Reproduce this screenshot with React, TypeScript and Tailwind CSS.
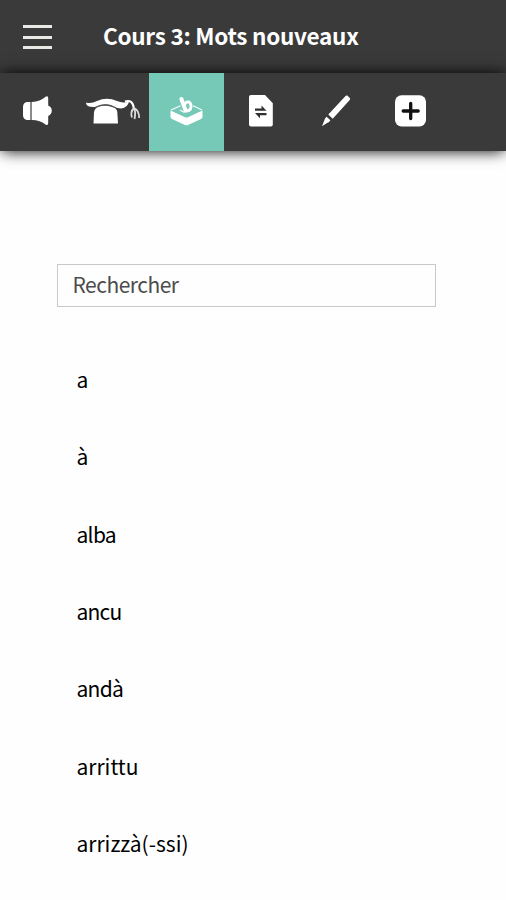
import type { ReactNode } from "react";

const words = [
  { text: "a", spacing: "tracking-normal" },
  { text: "à", spacing: "tracking-normal" },
  { text: "alba", spacing: "tracking-[-0.7px]" },
  { text: "ancu", spacing: "tracking-[-0.8px]" },
  { text: "andà", spacing: "tracking-[-0.7px]" },
  { text: "arrittu", spacing: "tracking-normal" },
  { text: "arrizzà(-ssi)", spacing: "tracking-normal" },
];

function Tab({ label, active, children }: { label: string; active?: boolean; children: ReactNode }) {
  return (
    <button aria-label={label} className={`h-[78px] shrink-0 ${active ? "w-[75px] bg-[#76c9b6]" : "w-[74.5px]"}`}>
      <svg viewBox="0 0 75 78" className="h-[78px] w-[75px]" fill="white">
        {children}
      </svg>
    </button>
  );
}

export default function App() {
  return (
    <div className="h-[900px] w-full overflow-hidden bg-[#fefefe] font-['Noto_Sans_CJK_SC','Noto_Sans',sans-serif] text-black">
      <header className="flex h-[73px] items-center bg-[#3a3a3a]">
        <button aria-label="Menu" className="ml-[23px] flex w-[29px] flex-col gap-[7.5px] pt-[1px]">
          <span className="h-[3px] bg-[#e8e8e4]" />
          <span className="h-[3px] bg-[#e8e8e4]" />
          <span className="h-[3px] bg-[#e8e8e4]" />
        </button>
        <h1 className="ml-[51px] pb-[4px] text-[22.5px] leading-[32px] font-bold tracking-[-0.27px] whitespace-nowrap text-white">
          Cours 3: Mots nouveaux
        </h1>
      </header>
      <nav className="relative flex h-[78px] bg-[#3a3a3a] shadow-[0_-1px_14px_-1px_rgba(0,0,0,0.9),0_5px_14px_-4px_rgba(0,0,0,0.4)]">
        <Tab label="Audio">
          <path d="M26.5 29 H30 V47 H26.5 Q23 46 23 42 V34 Q23 30 26.5 29Z" />
          <path d="M30 29H32V47H30Z" fill="#8a8a8a" />
          <path d="M32 29 Q40 28.5 46 23.5 Q48 22.3 48.2 25 V32.5 Q51.8 34 51.8 37.5 Q51.8 41 48.2 43 V50 Q48 53 45.5 51.5 Q40 47 32 47Z" />
        </Tab>
        <Tab label="Leçons">
          <path d="M11 29.5 Q16 31 22 28 Q32 23.5 42 28 Q48 30.5 54 28.5 Q53 34.5 46 35.5 Q42 35.5 39 33.5 Q30 29 20 34 Q11 34.5 11 29.5Z" />
          <path d="M20 34.5 Q30 29 40.5 34.5" fill="none" stroke="#5a5a5a" strokeWidth="0.9" />
          <path d="M23 34 Q30 31.5 37 34 Q42 35 42.3 39 L43 50.5 H18.5 L19 39 Q20 35 23 34Z" />
          <path d="M50 28.5 Q58 26 59 36" fill="none" stroke="white" strokeWidth="2" />
          <path d="M59 35 Q55 39 57 44.5 M59 35 Q61 39 59.5 46 M59 35 Q64 37 64.2 45" fill="none" stroke="#dedede" strokeWidth="1.8" />
        </Tab>
        <Tab label="Vocabulaire" active>
          <path d="M21.5 37.5 L35.5 44 Q37.5 45 39.5 44 L53.5 37.5 V44 Q53.5 45.3 51.5 46.2 L39 52 Q37.5 52.7 36 52 L23.5 46.2 Q21.5 45.3 21.5 44Z" />
          <path d="M22 37 L31.5 32.8 M44 32.8 L53 37 M31 37 L35.5 39.5" fill="none" stroke="white" strokeWidth="1.1" />
          <path d="M32.4 26 L36.6 37.5" fill="none" stroke="white" strokeWidth="4" strokeLinecap="round" />
          <path d="M36 30.5 Q40.3 26.8 41.8 31.5 Q43.2 37.4 37.5 38" fill="none" stroke="white" strokeWidth="3" strokeLinecap="round" />
        </Tab>
        <Tab label="Traduction">
          <path d="M27 22 H41 L48.8 30.3 V51.5 Q48.8 53.5 46.8 53.5 H27 Q25 53.5 25 51.5 V24 Q25 22 27 22Z" />
          <path d="M31 35.5 H37.5 V32.5 L42.5 37.7 H31Z M42.5 40 H31 L36 45.3 V42.2 H42.5Z" fill="#303030" />
        </Tab>
        <Tab label="Exercices">
          <path d="M48.3 22.6 L51 25.3 Q51.4 26 50.7 27 L33.7 45.7 L29.3 41.5 L46.3 23.2 Q47.3 22 48.3 22.6Z M27.6 43.7 L31.4 47.3 Q30.4 49.3 28 49.9 L23 53.3 L25 48.3 Q25.8 45 27.6 43.7Z" />
        </Tab>
        <Tab label="Ajouter">
          <rect x="22" y="22.3" width="31" height="31.2" rx="6.5" />
          <path d="M30.2 38 H45.2 M37.7 30.5 V45.5" stroke="#101010" strokeWidth="3.3" strokeLinecap="round" />
        </Tab>
      </nav>
      <main>
        <div className="mt-[113px] ml-[57px] flex h-[43px] w-[379px] border border-[#c9c9c9] bg-[#fefefe]">
          <input
            aria-label="Rechercher"
            placeholder="Rechercher"
            className="w-full pb-[4px] pl-[14.5px] text-[21px] leading-[32px] tracking-[-0.5px] outline-none placeholder:text-[#4c4c4c]"
          />
        </div>
        <ul className="mt-[33.5px] ml-[76.5px]">
          {words.map((word) => (
            <li key={word.text} className={`flex h-[77.33px] items-center text-[21px] leading-[32px] ${word.spacing}`}>
              {word.text}
            </li>
          ))}
        </ul>
      </main>
    </div>
  );
}
